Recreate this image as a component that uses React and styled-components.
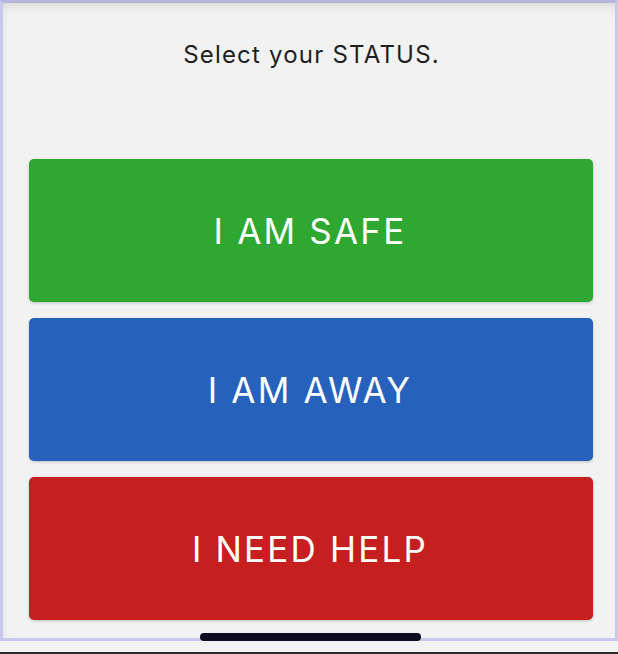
import React from "react";
import styled, { createGlobalStyle } from "styled-components";

const Global = createGlobalStyle`
  html, body { margin: 0; padding: 0; background: #f2f2f2; }
  body { font-family: Inter, Roboto, "Liberation Sans", Arial, sans-serif; }
`;

const Page = styled.div`
  width: 618px;
  height: 654px;
  box-sizing: border-box;
  background: #f2f2f2;
  border-bottom: 2px solid #2b2b2b;
  overflow: hidden;
`;

const Frame = styled.div`
  position: relative;
  width: 618px;
  height: 641px;
  box-sizing: border-box;
  border: 3px solid #c6c9ea;
  border-top-color: #b3b7dc;
  background: #f2f2f2;
  box-shadow: inset 0 10px 12px -8px rgba(0, 0, 0, 0.12),
    inset 6px 0 8px -6px rgba(0, 0, 0, 0.06);
  display: flex;
  flex-direction: column;
  padding: 38px 22px 0 26px;
`;

const Title = styled.div`
  text-align: center;
  font-family: Inter, Roboto, sans-serif;
  font-size: 24px;
  line-height: 27px;
  letter-spacing: 1.2px;
  color: #1f1f1f;
  padding-left: 1px;
`;

const Buttons = styled.div`
  display: flex;
  flex-direction: column;
  gap: 16px;
  margin-top: 91px;
`;

const StatusButton = styled.button`
  height: 143px;
  width: 100%;
  border: none;
  border-radius: 5px;
  background: ${(p) => p.$bg};
  color: #ffffff;
  font-family: Inter, Roboto, sans-serif;
  font-size: 35px;
  font-weight: 400;
  letter-spacing: 2.2px;
  display: flex;
  align-items: center;
  justify-content: center;
  box-shadow: 0 1px 3px rgba(0, 0, 0, 0.22);
  padding: 0 2px 0 0;
  cursor: pointer;
`;

const HomeIndicator = styled.div`
  position: absolute;
  left: 197px;
  bottom: -3px;
  width: 221px;
  height: 8px;
  border-radius: 4px;
  background: #0a0d22;
`;

export default function App() {
  return (
    <>
      <Global />
      <Page>
        <Frame>
          <Title>Select your STATUS.</Title>
          <Buttons>
            <StatusButton $bg="#2ea830">I AM SAFE</StatusButton>
            <StatusButton $bg="#2661bb">I AM AWAY</StatusButton>
            <StatusButton $bg="#c61f20">I NEED HELP</StatusButton>
          </Buttons>
          <HomeIndicator />
        </Frame>
      </Page>
    </>
  );
}
